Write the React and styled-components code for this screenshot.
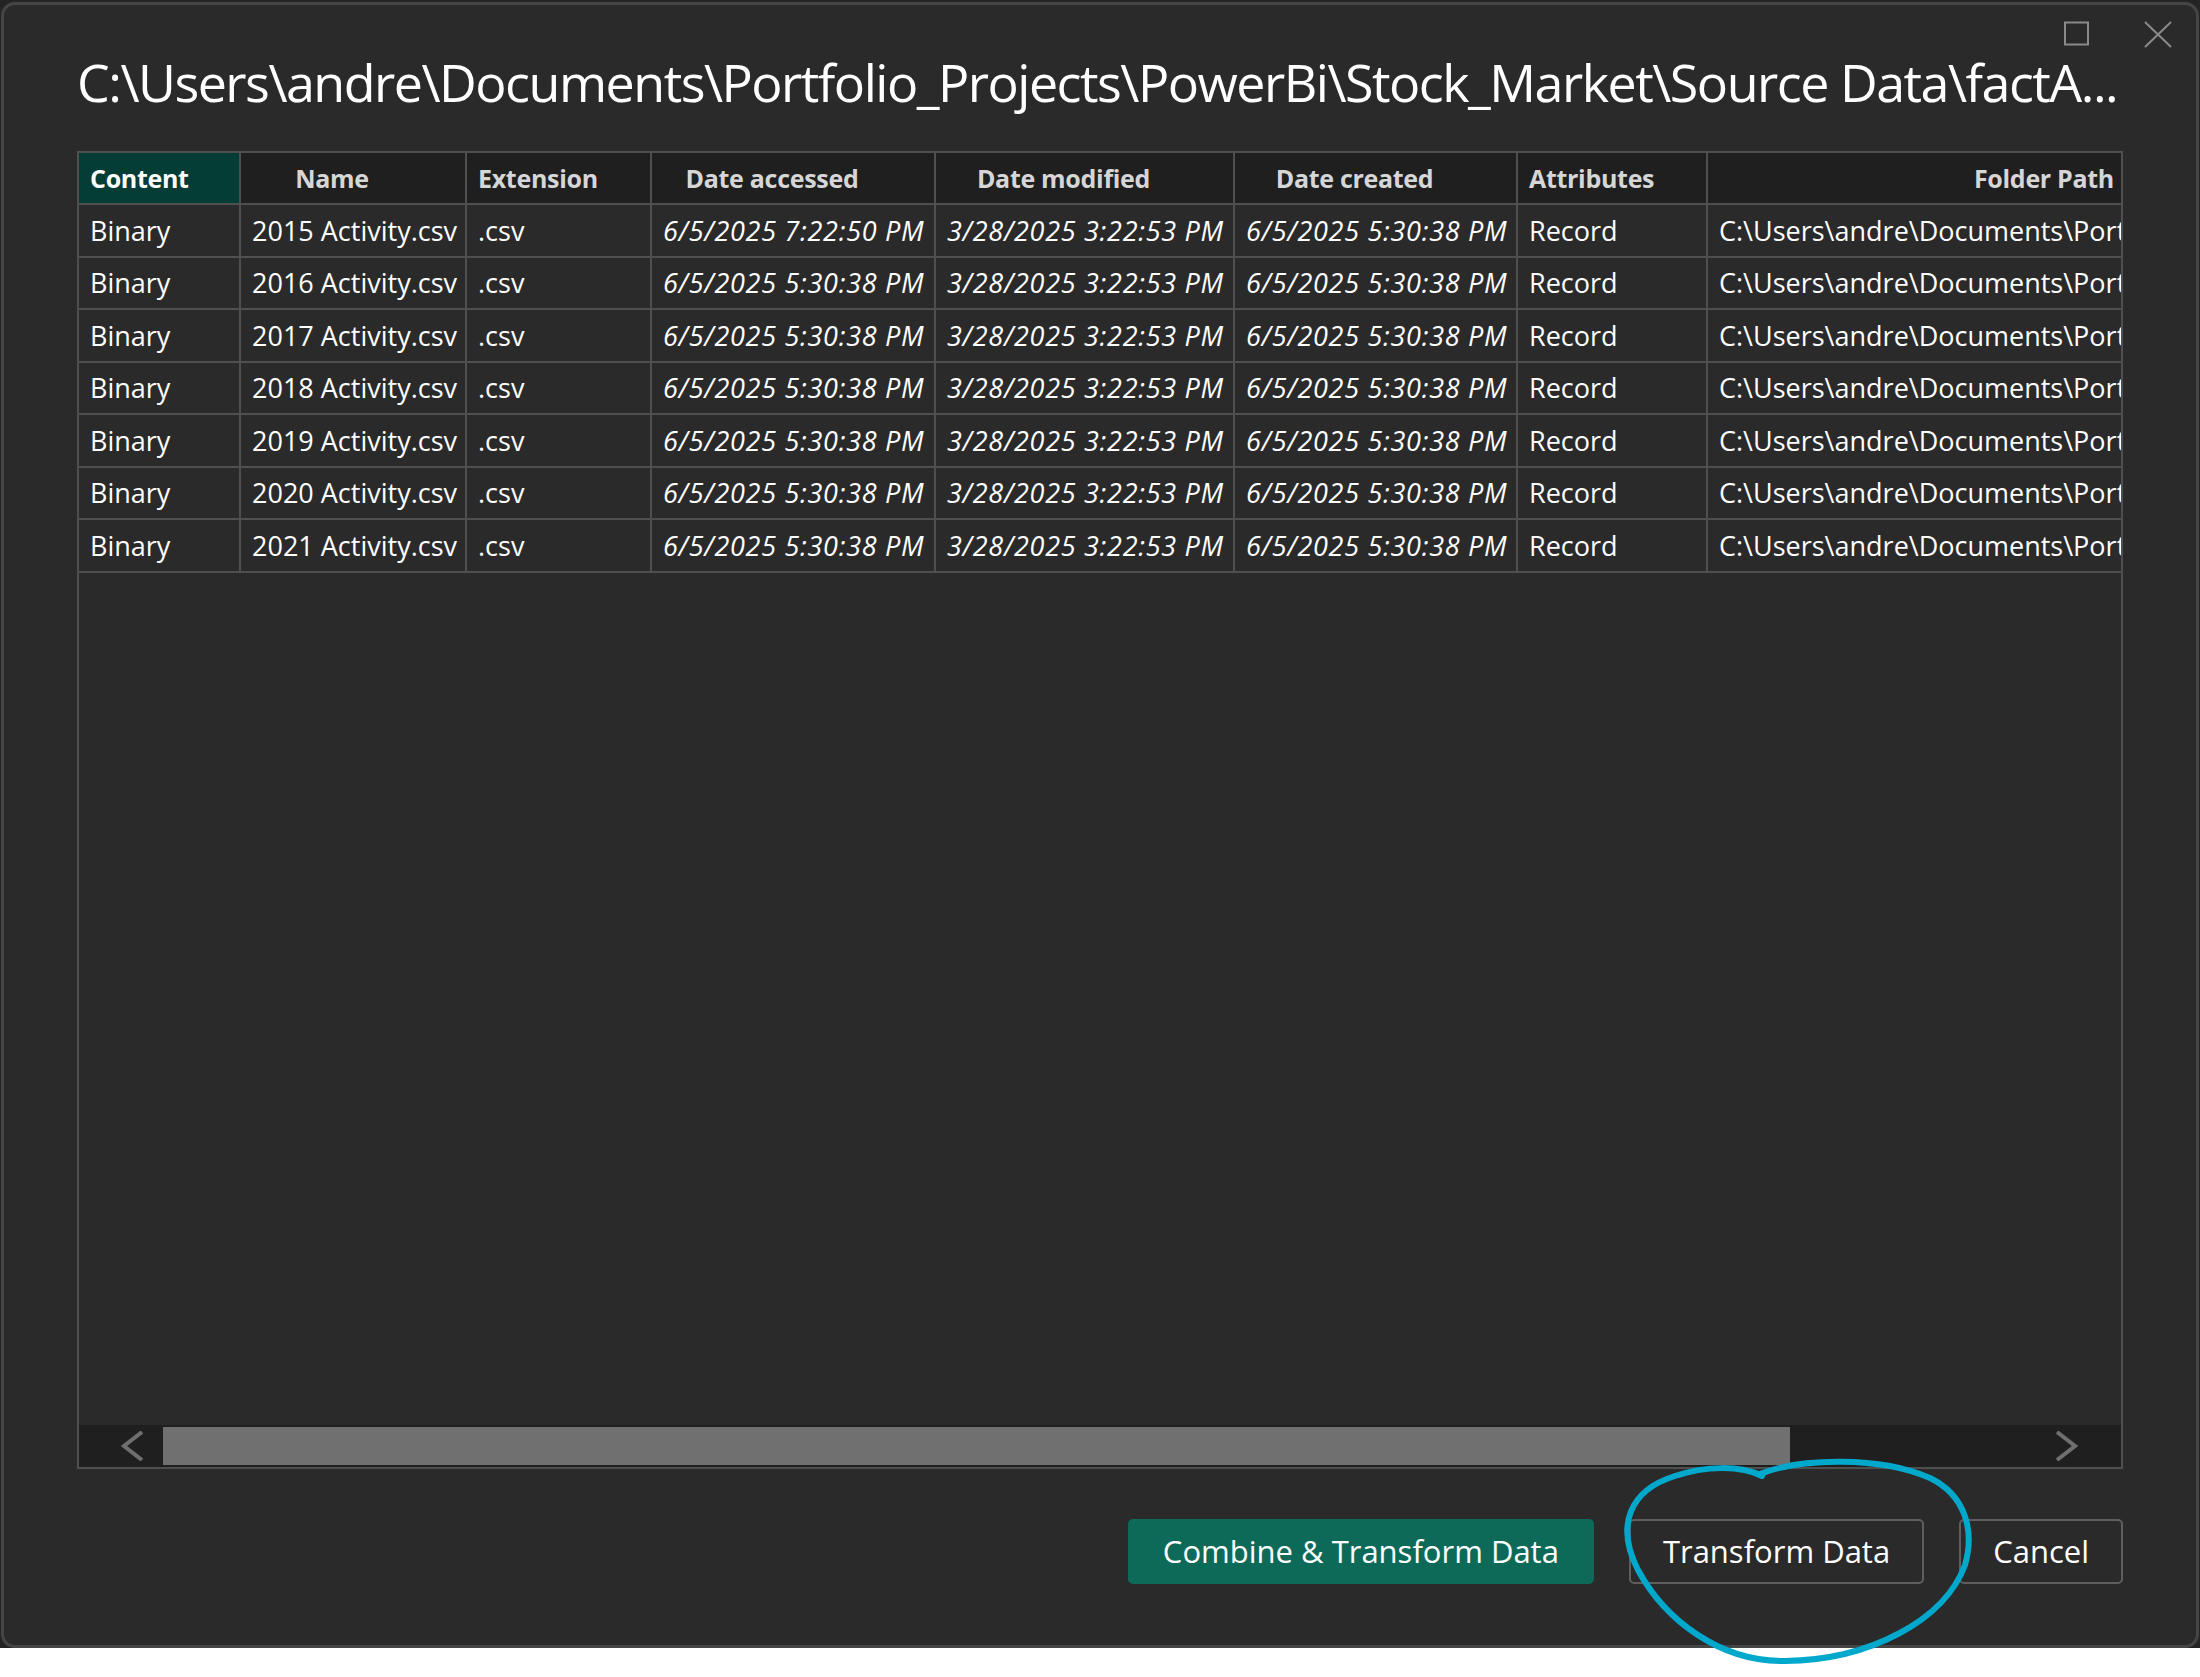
import React from "react";
import styled, { createGlobalStyle } from "styled-components";

const GlobalStyle = createGlobalStyle`
  html, body {
    margin: 0;
    padding: 0;
    background: #ffffff;
  }
  body {
    font-family: "Open Sans", "Noto Sans", sans-serif;
  }
`;

const Page = styled.div`
  position: relative;
  width: 2200px;
  height: 1677px;
  background: #ffffff;
  overflow: hidden;
`;

const Backdrop = styled.div`
  height: 1648px;
  box-sizing: border-box;
  padding: 2px 1px 0 1px;
  background: #242424;
`;

const Dialog = styled.div`
  height: 100%;
  box-sizing: border-box;
  display: flex;
  flex-direction: column;
  background: #2a2a2a;
  border: 3px solid #454545;
  border-radius: 14px;
`;

const ChromeBar = styled.div`
  display: flex;
  justify-content: flex-end;
  align-items: center;
  gap: 54px;
  height: 42px;
  box-sizing: border-box;
  padding: 16px 24px 0 0;
`;

const ChromeIcon = styled.svg`
  display: block;
  color: #8a8a8a;
`;

const Body = styled.div`
  flex: 1;
  display: flex;
  flex-direction: column;
  padding: 0 73px;
  min-height: 0;
`;

const Title = styled.h1`
  margin: 4px 0 38px 0;
  font-size: 52px;
  line-height: 62px;
  font-weight: 400;
  color: #ffffff;
  white-space: nowrap;
  letter-spacing: -1.5px;
`;

const TableFrame = styled.div`
  flex: 1;
  display: flex;
  flex-direction: column;
  border: 2px solid #4f4f4f;
  min-height: 0;
`;

const Grid = styled.div`
  display: grid;
  grid-template-columns: 162px 226px 185px 284px 299px 283px 190px 1fr;
  grid-auto-rows: 52.5px;
  grid-template-rows: 52px;
`;

const HeadCell = styled.div`
  display: flex;
  align-items: center;
  justify-content: ${(p) =>
    p.$align === "center" ? "center" : p.$align === "right" ? "flex-end" : "flex-start"};
  box-sizing: border-box;
  padding: ${(p) =>
    p.$align === "center" ? "0 42px 0 0" : p.$align === "right" ? "0 7px 0 0" : "0 0 0 11px"};
  background: ${(p) => (p.$active ? "#043c36" : "#1f1f1f")};
  color: ${(p) => (p.$active ? "#ffffff" : "#d6d6d6")};
  border-right: ${(p) => (p.$last ? "none" : "2px solid #4f4f4f")};
  border-bottom: 2px solid #4f4f4f;
  font-size: 25px;
  font-weight: 700;
  letter-spacing: -0.3px;
  white-space: nowrap;
  overflow: hidden;
`;

const Cell = styled.div`
  display: flex;
  align-items: center;
  box-sizing: border-box;
  padding: 0 0 0 11px;
  border-right: ${(p) => (p.$last ? "none" : "2px solid #4f4f4f")};
  border-bottom: 2px solid #4f4f4f;
  color: #ffffff;
  font-size: 27px;
  font-style: ${(p) => (p.$italic ? "italic" : "normal")};
  letter-spacing: ${(p) => (p.$italic ? "0.7px" : "0")};
  white-space: nowrap;
  overflow: hidden;
`;

const Filler = styled.div`
  flex: 1;
`;

const ScrollBar = styled.div`
  display: flex;
  height: 42px;
  background: #1f1f1f;
`;

const ScrollButton = styled.div`
  width: 84px;
  flex: none;
  display: flex;
  align-items: center;
  justify-content: ${(p) => (p.$side === "left" ? "flex-end" : "flex-start")};
  padding: ${(p) => (p.$side === "left" ? "0 19px 0 0" : "0 0 0 18px")};
  box-sizing: border-box;
  color: #6f6f6f;
`;

const ScrollTrack = styled.div`
  flex: 1;
  display: flex;
  align-items: stretch;
  padding: 2px 0;
`;

const ScrollThumb = styled.div`
  width: ${(p) => p.$size}%;
  background: #707070;
`;

const Footer = styled.div`
  display: flex;
  justify-content: flex-end;
  gap: 35px;
  padding: 50px 0 61px 0;
`;

const Button = styled.button`
  height: 65px;
  box-sizing: border-box;
  padding: 0 ${(p) => (p.$primary ? "33px" : "32px")};
  border-radius: 5px;
  border: 2px solid ${(p) => (p.$primary ? "#0e6a58" : "#5e5e5e")};
  background: ${(p) => (p.$primary ? "#0e6a58" : "transparent")};
  color: #ffffff;
  font-family: "Open Sans", "Noto Sans", sans-serif;
  font-size: 31px;
  line-height: 1;
  font-weight: 400;
  white-space: nowrap;
  cursor: pointer;
`;

const Annotation = styled.svg`
  position: absolute;
  left: 0;
  top: 0;
  pointer-events: none;
`;

const folder =
  "C:\\Users\\andre\\Documents\\Portfolio_Projects\\PowerBi\\Stock_Market\\Source Data\\";

const columns = [
  { key: "content", label: "Content", align: "left", active: true },
  { key: "name", label: "Name", align: "center" },
  { key: "ext", label: "Extension", align: "left" },
  { key: "accessed", label: "Date accessed", align: "center", italic: true },
  { key: "modified", label: "Date modified", align: "center", italic: true },
  { key: "created", label: "Date created", align: "center", italic: true },
  { key: "attr", label: "Attributes", align: "left" },
  { key: "path", label: "Folder Path", align: "right" },
];

const rows = [2015, 2016, 2017, 2018, 2019, 2020, 2021].map((year) => ({
  content: "Binary",
  name: `${year} Activity.csv`,
  ext: ".csv",
  accessed: year === 2015 ? "6/5/2025 7:22:50 PM" : "6/5/2025 5:30:38 PM",
  modified: "3/28/2025 3:22:53 PM",
  created: "6/5/2025 5:30:38 PM",
  attr: "Record",
  path: folder,
}));

export default function App() {
  return (
    <Page>
      <GlobalStyle />
      <Backdrop>
        <Dialog>
          <ChromeBar>
            <ChromeIcon width="26" height="26" viewBox="0 0 26 26">
              <rect x="1" y="1.5" width="23" height="22" fill="none" stroke="currentColor" strokeWidth="2" />
            </ChromeIcon>
            <ChromeIcon width="28" height="27" viewBox="0 0 28 27">
              <path d="M1 1 L27 26 M27 1 L1 26" stroke="currentColor" strokeWidth="2" fill="none" />
            </ChromeIcon>
          </ChromeBar>
          <Body>
            <Title>{folder}factA...</Title>
            <TableFrame>
              <Grid>
                {columns.map((c, i) => (
                  <HeadCell
                    key={c.key}
                    $align={c.align}
                    $active={c.active}
                    $last={i === columns.length - 1}
                  >
                    {c.label}
                  </HeadCell>
                ))}
                {rows.map((r, ri) =>
                  columns.map((c, i) => (
                    <Cell
                      key={`${ri}-${c.key}`}
                      $italic={c.italic}
                      $last={i === columns.length - 1}
                    >
                      {r[c.key]}
                    </Cell>
                  ))
                )}
              </Grid>
              <Filler />
              <ScrollBar>
                <ScrollButton $side="left">
                  <svg width="24" height="30" viewBox="0 0 24 30">
                    <path d="M22 1 L4 15 L22 29" fill="none" stroke="currentColor" strokeWidth="4" />
                  </svg>
                </ScrollButton>
                <ScrollTrack>
                  <ScrollThumb $size={86.8} />
                </ScrollTrack>
                <ScrollButton $side="right">
                  <svg width="24" height="30" viewBox="0 0 24 30">
                    <path d="M2 1 L20 15 L2 29" fill="none" stroke="currentColor" strokeWidth="4" />
                  </svg>
                </ScrollButton>
              </ScrollBar>
            </TableFrame>
            <Footer>
              <Button $primary>Combine &amp; Transform Data</Button>
              <Button>Transform Data</Button>
              <Button>Cancel</Button>
            </Footer>
          </Body>
        </Dialog>
      </Backdrop>
      <Annotation width="2200" height="1677" viewBox="0 0 2200 1677">
        <path
          d="M1760 1474 C1800 1458 1880 1456 1930 1478 C1965 1495 1975 1530 1965 1565 C1945 1620 1870 1660 1785 1661 C1720 1662 1665 1620 1638 1570 C1615 1525 1630 1490 1675 1476 C1705 1466 1740 1465 1762 1476"
          fill="none"
          stroke="#00a8cc"
          strokeWidth="6"
          strokeLinecap="round"
        />
      </Annotation>
    </Page>
  );
}
